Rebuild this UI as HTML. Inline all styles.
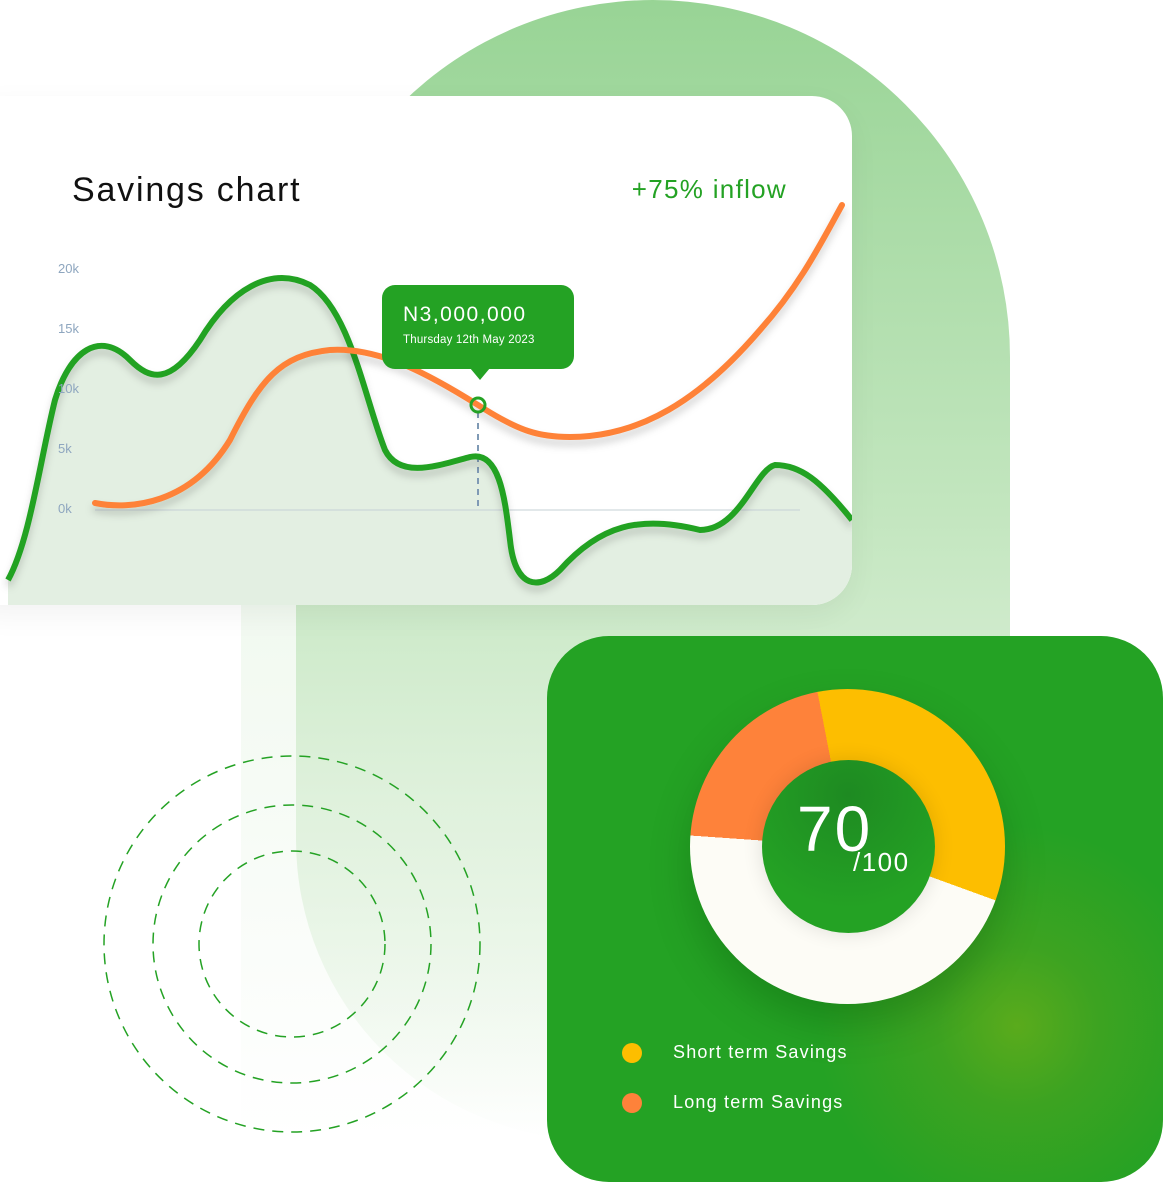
<!DOCTYPE html>
<html><head><meta charset="utf-8"><style>
*{margin:0;padding:0;box-sizing:border-box}
body{width:1164px;height:1182px;overflow:hidden;background:#fff;position:relative;font-family:"Liberation Sans",sans-serif}
.abs{position:absolute}
</style></head><body>
<div class="abs" style="left:241px;top:60px;width:710px;height:1080px;border-radius:355px 355px 0 0;background:linear-gradient(180deg,#d6eed3 0%,#e8f5e6 50%,rgba(240,249,239,0) 100%);opacity:0.6"></div>
<div class="abs" style="left:296px;top:0;width:714px;height:1140px;border-radius:357px 357px 0 300px;background:linear-gradient(180deg,#98d495 0%,#c3e6bf 45%,#dff1dc 70%,rgba(240,249,239,0) 100%)"></div>
<div class="abs" style="left:-40px;top:96px;width:892px;height:509px;border-radius:40px;background:#fff;box-shadow:0 10px 30px rgba(0,0,0,0.05)"></div>
<svg class="abs" style="left:0;top:0" width="1164" height="1182">
<defs><clipPath id="c"><rect x="-40" y="96" width="892" height="509" rx="40"/></clipPath>
<filter id="s" x="-10%" y="-10%" width="120%" height="130%"><feDropShadow dx="0" dy="6" stdDeviation="4" flood-color="#000" flood-opacity="0.18"/></filter></defs>
<g clip-path="url(#c)">
<path d="M8,580 C30,540 40,460 55,400 C70,350 100,330 130,360 C150,380 170,385 200,340 C230,290 270,265 310,285 C350,310 365,400 385,450 C400,480 440,465 470,457 C500,450 505,500 510,540 C515,590 540,590 560,570 C600,525 640,515 700,530 C740,530 755,470 775,465 C800,465 820,480 852,520 L852,605 L8,605 Z" fill="#e3efe2"/>
<line x1="95" y1="510" x2="800" y2="510" stroke="#c6d0d6" stroke-width="1"/>
<line x1="478" y1="412" x2="478" y2="510" stroke="#7f9ab5" stroke-width="2" stroke-dasharray="6,5"/>
<path d="M8,580 C30,540 40,460 55,400 C70,350 100,330 130,360 C150,380 170,385 200,340 C230,290 270,265 310,285 C350,310 365,400 385,450 C400,480 440,465 470,457 C500,450 505,500 510,540 C515,590 540,590 560,570 C600,525 640,515 700,530 C740,530 755,470 775,465 C800,465 820,480 852,520" fill="none" stroke="#24a224" stroke-width="6" filter="url(#s)"/>
<path d="M95,503 C130,510 190,505 230,440 C260,380 280,355 330,350 C380,347 430,375 478,405 C520,432 540,437 570,437 C640,437 700,400 760,330 C800,285 820,245 842,205" fill="none" stroke="#fe8238" stroke-width="6" stroke-linecap="round" filter="url(#s)"/>
</g>
<circle cx="478" cy="405" r="7" fill="none" stroke="#24a224" stroke-width="3"/>
<rect x="382" y="285" width="192" height="84" rx="13" fill="#24a224"/>
<path d="M470,368 L480,380 L490,368 Z" fill="#24a224"/>
<text x="403" y="321" font-size="21" fill="#fff" letter-spacing="1.5">N3,000,000</text>
<text x="403" y="343" font-size="11.5" fill="#fff" letter-spacing="0.2">Thursday 12th May 2023</text>
<text x="72" y="201" font-size="34" fill="#111" letter-spacing="1.8">Savings chart</text>
<text x="787" y="198" font-size="26" fill="#24a224" text-anchor="end" letter-spacing="1.3">+75% inflow</text>
<g font-size="13" fill="#8ea6bf"><text x="58" y="273">20k</text><text x="58" y="333">15k</text><text x="58" y="393">10k</text><text x="58" y="453">5k</text><text x="58" y="513">0k</text></g>
<g fill="none" stroke="#24a224" stroke-width="1.5" stroke-dasharray="11,8"><circle cx="292" cy="944" r="188"/><circle cx="292" cy="944" r="139"/><circle cx="292" cy="944" r="93"/></g>
</svg>
<div class="abs" style="left:547px;top:636px;width:616px;height:546px;border-radius:62px;background:radial-gradient(circle at 470px 390px,#5aab1c 0%,#3da321 80px,#24a224 200px)"></div>
<div class="abs" style="left:690px;top:689px;width:315px;height:315px;border-radius:50%;background:conic-gradient(from -11deg,#fdbe00 0deg 121deg,#fdfcf6 121deg 285deg,#fe823a 285deg 360deg);box-shadow:0 20px 40px rgba(0,60,0,0.25)"></div>
<div class="abs" style="left:762px;top:760px;width:173px;height:173px;border-radius:50%;background:radial-gradient(circle at 50% 20%,#1e8a22,#24a224 70%);box-shadow:0 0 20px rgba(0,0,0,0.12)"></div>
<div class="abs" style="left:797px;top:797px;font-size:64px;color:#fff;line-height:1;letter-spacing:2px">70</div>
<div class="abs" style="left:853px;top:849px;font-size:26px;color:#fff;line-height:1;letter-spacing:1.5px">/100</div>
<div class="abs" style="left:622px;top:1043px;width:20px;height:20px;border-radius:50%;background:#fdbe00"></div>
<div class="abs" style="left:622px;top:1093px;width:20px;height:20px;border-radius:50%;background:#fe823a"></div>
<div class="abs" style="left:673px;top:1042px;font-size:18px;color:#fff;letter-spacing:1.2px">Short term Savings</div>
<div class="abs" style="left:673px;top:1092px;font-size:18px;color:#fff;letter-spacing:1.2px">Long term Savings</div>
</body></html>
